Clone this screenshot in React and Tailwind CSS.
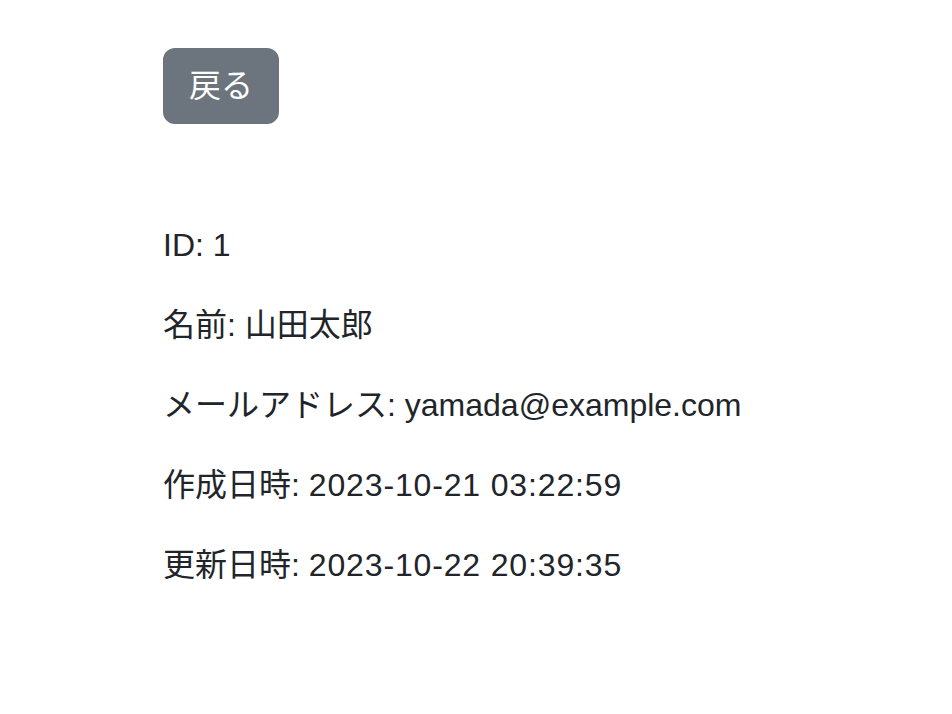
export default function App() {
  const rows = [
    ['ID', '1', true],
    ['名前', '山田太郎', false],
    ['メールアドレス', 'yamada@example.com', false],
    ['作成日時', '2023-10-21 03:22:59', true],
    ['更新日時', '2023-10-22 20:39:35', true],
  ];

  return (
    <div className="min-h-screen bg-white text-[#212529] font-['Liberation_Sans','Noto_Sans_CJK_JP',sans-serif]">
      <div className="pl-[163px] pt-[48px]">
        <button className="bg-[#6c757d] text-white text-[32px] leading-[48px] px-[24px] py-[12px] border-2 border-[#6c757d] rounded-[12px]">
          戻る
        </button>

        <div className="mt-[97px]">
          {rows.map(([label, value, numeric]) => (
            <p key={label} className="text-[32px] leading-[48px] mb-[32px]">
              {label}: <span className={numeric ? 'tracking-[0.85px]' : ''}>{value}</span>
            </p>
          ))}
        </div>
      </div>
    </div>
  );
}
